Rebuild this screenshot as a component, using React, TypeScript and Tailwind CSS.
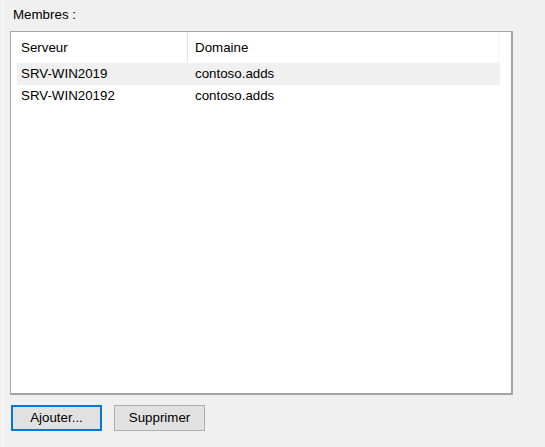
const members = [
  { server: "SRV-WIN2019", domain: "contoso.adds", selected: true },
  { server: "SRV-WIN20192", domain: "contoso.adds", selected: false },
];

export default function App() {
  return (
    <div className="w-[545px] h-[447px] bg-[#f0f0f0] flex font-['Liberation_Sans',Arial,sans-serif] text-[13.33px] text-black">
      <div className="w-[2px]" />
      <div className="w-px bg-[#fbfbfb]" />
      <div className="flex flex-col pl-[7px] pt-[7px]">
        <div className="ml-[3px] h-4 leading-4">Membres :</div>

        <div className="mt-2 w-[503px] h-[364px] bg-white border-t border-l border-r-2 border-b-2 border-[#a3a3a8]">
          <div className="flex h-[31px] ml-[6px] w-[482px] border-r border-[#f3f3f3]">
            <div className="w-[170px] pl-[4px] flex items-center">Serveur</div>
            <div className="w-px bg-[#e5e5e5]" />
            <div className="flex-1 pl-[7px] flex items-center">Domaine</div>
          </div>
          {members.map((m) => (
            <div
              key={m.server}
              className={`flex h-[22px] ml-[6px] w-[483px] items-center ${m.selected ? "bg-[#f0f0f0]" : ""}`}
            >
              <div className="w-[171px] pl-[4px]">{m.server}</div>
              <div className="flex-1 pl-[7px]">{m.domain}</div>
            </div>
          ))}
        </div>

        <div className="flex gap-3 mt-[10px] ml-px">
          <button className="w-[91px] h-[26px] bg-[#e1e1e1] border-2 border-[#0078d7] flex items-center justify-center">
            Ajouter...
          </button>
          <button className="w-[91px] h-[26px] bg-[#e1e1e1] border border-[#adadad] flex items-center justify-center">
            Supprimer
          </button>
        </div>
      </div>
    </div>
  );
}
